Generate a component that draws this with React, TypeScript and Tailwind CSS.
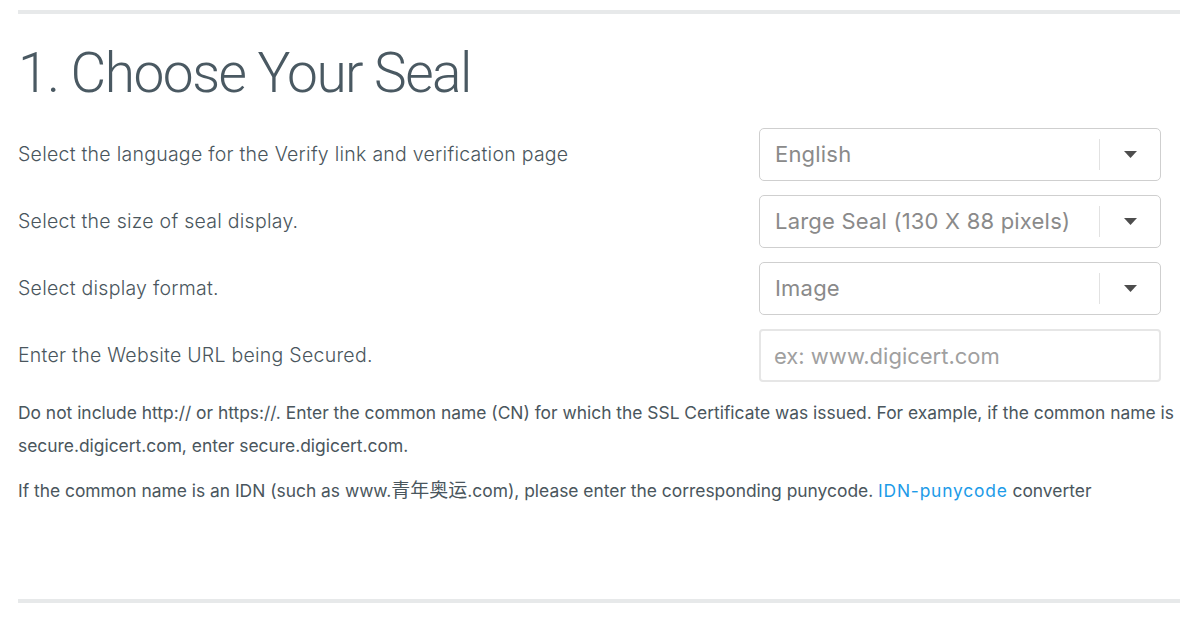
import React from "react";

const Caret = () => (
  <svg width="13" height="7" viewBox="0 0 13 7" className="block">
    <path d="M0 0 L13 0 L6.5 7 Z" fill="#4d4d4d" />
  </svg>
);

const Select = ({ value }: { value: string }) => (
  <div className="flex h-[53px] w-[402px] items-center rounded-[5px] border border-[#cfcfcf] bg-white">
    <span className="flex-1 pl-[15px] text-[22px] tracking-[0.2px] text-[#8a8a8a]">{value}</span>
    <div className="h-[31px] w-px bg-[#e2e2e2]" />
    <div className="flex w-[60px] items-center justify-center">
      <Caret />
    </div>
  </div>
);

const Row = ({ label, children }: { label: string; children: React.ReactNode }) => (
  <div className="flex items-center justify-between pr-[19px]">
    <span className="text-[19.5px] font-light tracking-[0.26px] text-[#4a565d]">{label}</span>
    {children}
  </div>
);

export default function App() {
  return (
    <div
      className="min-h-[619px] bg-white px-[18px] pr-[20px]"
      style={{ fontFamily: 'Inter, "Noto Sans CJK SC", sans-serif' }}
    >
      <div className="pt-[10px]">
        <div className="h-[4px] bg-[#e7e9ea]" />
      </div>
      <h1
        className="mt-[24px] text-[55px] font-light leading-[70px] tracking-[-1.5px] text-[#4a5962]"
        style={{ fontFamily: 'Roboto, sans-serif' }}
      >
        1. Choose Your Seal
      </h1>
      <div className="mt-[20px] flex flex-col gap-[14px]">
        <Row label="Select the language for the Verify link and verification page">
          <Select value="English" />
        </Row>
        <Row label="Select the size of seal display.">
          <Select value="Large Seal (130 X 88 pixels)" />
        </Row>
        <Row label="Select display format.">
          <Select value="Image" />
        </Row>
        <Row label="Enter the Website URL being Secured.">
          <input
            placeholder="ex: www.digicert.com"
            className="h-[53px] w-[402px] rounded-[4px] border-2 border-[#e6e6e6] px-[13px] text-[22px] text-[#8a8a8a] placeholder:text-[#a0a0a0] outline-none"
          />
        </Row>
      </div>
      <div className="mt-[14px] text-[17.4px] leading-[33px] text-[#4a565d]">
        <p>
          Do not include http:// or https://. Enter the common name (CN) for which the SSL Certificate was issued. For
          example, if the common name is secure.digicert.com, enter secure.digicert.com.
        </p>
        <p className="mt-[12px]">
          If the common name is an IDN (such as www.<span className="text-[19px]">青年奥运</span>.com), please enter the
          corresponding punycode. <a className="tracking-[0.8px] text-[#1d9be8]">IDN-punycode</a> converter
        </p>
      </div>
      <div className="mt-[92px] h-[4px] bg-[#e7e9ea]" />
    </div>
  );
}
